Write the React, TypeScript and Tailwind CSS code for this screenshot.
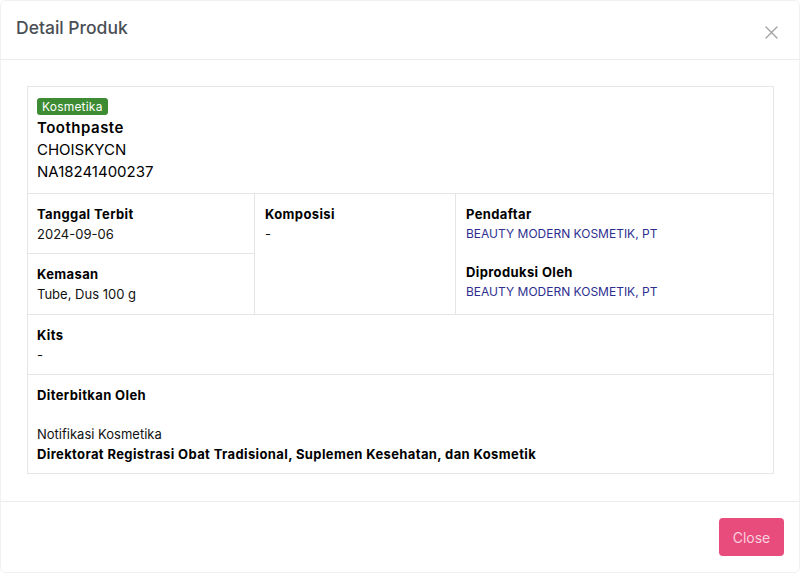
import React from "react";

const font = { fontFamily: "Inter, 'Noto Sans', sans-serif" };

function Label({ children }: { children: React.ReactNode }) {
  return <div className="font-bold text-[13px] leading-[20px] tracking-[0.38px] text-black">{children}</div>;
}

function Value({ children, link }: { children: React.ReactNode; link?: boolean }) {
  return (
    <div className={`leading-[20px] ${link ? "text-[12px] text-[#2e2e8f]" : "text-[13px] text-[#111]"}`}>{children}</div>
  );
}

export default function App() {
  return (
    <div className="w-[800px] h-[573px] bg-white overflow-hidden" style={font}>
      <div className="h-full flex flex-col rounded-md border border-[#f1f1f1] bg-white">
        {/* header */}
        <div className="h-[59px] flex items-center justify-between pl-[15px] pr-[21px] border-b border-[#ececec] shrink-0">
          <h1 className="text-[17.5px] font-medium text-[#4a4f55] -mt-[3px]">Detail Produk</h1>
          <svg width="13" height="13" viewBox="0 0 13 13" className="mt-[4px]">
            <path d="M1 1 L12 12 M12 1 L1 12" stroke="#a0a0a0" strokeWidth="1.3" strokeLinecap="round" />
          </svg>
        </div>

        {/* body */}
        <div className="px-[26px] pt-[26px] pb-[27px] border-b border-[#ececec] shrink-0">
          <div className="border border-[#e6e6e6] w-[747px]">
            <div className="px-[9px] pt-[11px] pb-[10px] border-b border-[#e6e6e6]">
              <div className="w-fit bg-[#3d8b32] text-white text-[12px] leading-[17px] px-[5px] rounded-[3px] tracking-[0.2px]">
                Kosmetika
              </div>
              <div className="mt-[2px] text-[15px] leading-[22px] font-semibold tracking-[0.5px] text-black">Toothpaste</div>
              <div className="text-[15px] leading-[22px] text-black">CHOISKYCN</div>
              <div className="text-[15px] leading-[22px] text-black">NA18241400237</div>
            </div>

            <div className="flex border-b border-[#e6e6e6]">
              <div className="w-[227px] border-r border-[#e6e6e6] flex flex-col">
                <div className="px-[9px] pt-[10px] pb-[9px] border-b border-[#e6e6e6]">
                  <Label>Tanggal Terbit</Label>
                  <Value>2024-09-06</Value>
                </div>
                <div className="px-[9px] pt-[10px] pb-[10px]">
                  <Label>Kemasan</Label>
                  <Value>Tube, Dus 100 g</Value>
                </div>
              </div>
              <div className="w-[201px] border-r border-[#e6e6e6] px-[10px] py-[10px]">
                <Label>Komposisi</Label>
                <Value>-</Value>
              </div>
              <div className="flex-1 px-[10px] py-[10px]">
                <Label>Pendaftar</Label>
                <Value link>BEAUTY MODERN KOSMETIK, PT</Value>
                <div className="mt-[18px]">
                  <Label>Diproduksi Oleh</Label>
                  <Value link>BEAUTY MODERN KOSMETIK, PT</Value>
                </div>
              </div>
            </div>

            <div className="px-[9px] pt-[10px] pb-[9px] border-b border-[#e6e6e6]">
              <Label>Kits</Label>
              <Value>-</Value>
            </div>

            <div className="px-[9px] pt-[10px] pb-[9px]">
              <Label>Diterbitkan Oleh</Label>
              <div className="h-[19px]" />
              <Value>Notifikasi Kosmetika</Value>
              <Label>Direktorat Registrasi Obat Tradisional, Suplemen Kesehatan, dan Kosmetik</Label>
            </div>
          </div>
        </div>

        {/* footer */}
        <div className="flex justify-end pr-[15px] pt-[16px]">
          <button className="w-[65px] h-[38px] rounded-[4px] bg-[#e84c7d] text-[#fbd0dd] text-[14px]">Close</button>
        </div>
      </div>
    </div>
  );
}
